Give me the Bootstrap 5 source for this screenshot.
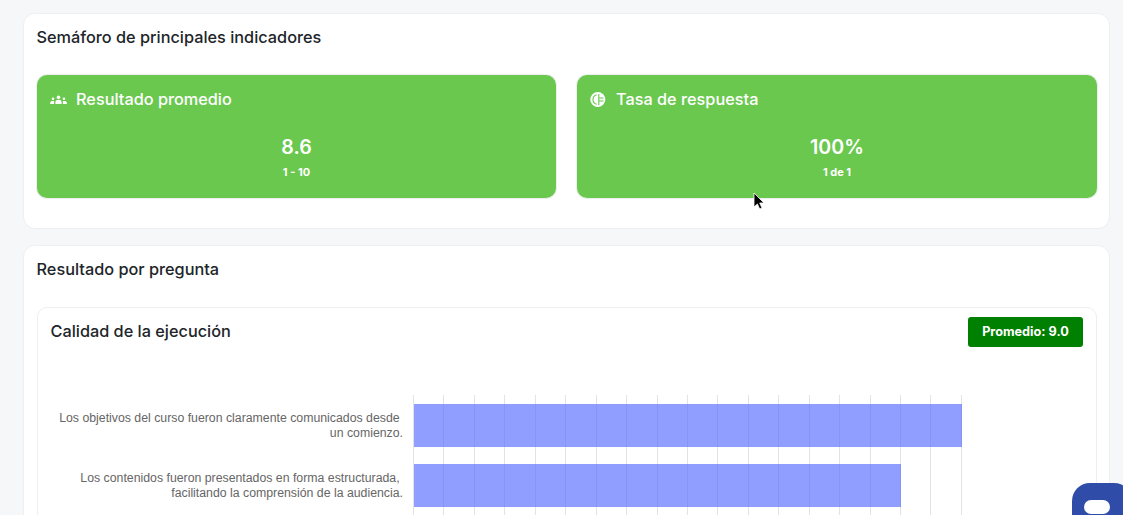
<!DOCTYPE html>
<html lang="es">
<head>
<meta charset="utf-8">
<title>Resultados</title>
<link href="https://cdn.jsdelivr.net/npm/bootstrap@5.3.0/dist/css/bootstrap.min.css" rel="stylesheet">
<style>
html,body{height:515px;overflow:hidden}
body{background:#f5f7f9;font-family:Inter,"Liberation Sans",sans-serif;color:#212529}
.shell{padding:13px 13px 0 23px;gap:16px;height:515px;overflow:hidden}
.panel{border:1px solid #eeeff1;border-radius:12px;background:#fff;flex:none}
.panel-top{height:216px;padding:13px 12px 13px 13px}
.panel-bottom{padding:13px 12px 13px 13px;height:400px}
.panel-title{font-size:16.3px;font-weight:450;line-height:20px;margin:-.5px 0 .5px -.5px;color:#212529}
.tiles{margin-top:28px;gap:21px}
.tile{flex:1;height:123px;background:#6bc84f;border-radius:10px;color:#fff;padding:13px 13px 0;box-shadow:0 0 0 1px #eceeef}
.tile:first-child{flex:0 0 519px}
.tile-head{font-size:16.3px;font-weight:500;line-height:22px;gap:9px}
.tile-ico{width:17px;height:17px;flex:none;margin-top:1px}
.tile-val{margin-top:25px;font-size:19.6px;font-weight:600;line-height:24px;text-align:center}
.tile-sub{margin-top:6px;font-size:11px;font-weight:700;line-height:14px;text-align:center}
.inner{margin-top:28px;border:1px solid #eeeff1;border-radius:10px;padding:9px 13px;height:300px}
.inner-title{font-size:16.3px;font-weight:450;margin:-2px 0 0 -.5px;line-height:30px}
.avg{background:green;color:#fff;font-size:12.7px;font-weight:700;line-height:30px;height:30px;width:115px;text-align:center;border-radius:3px}
.chart{margin-top:48px;margin-left:8px}
.labels{width:354px;padding-right:10px;padding-top:10px;font-family:"Liberation Sans",sans-serif;font-size:12.3px;line-height:15px;color:#666;text-align:right;white-space:nowrap}
.qlabel{height:60px;padding-top:6px}
.plot{position:relative;width:549px;height:130px;padding-top:9px;flex:none}
.bar{position:relative;z-index:1;height:43px;background:rgba(79,102,255,.63);margin-bottom:17px;margin-left:.5px}
.grid-lines{position:absolute;inset:0;display:flex;justify-content:space-between}
.grid-lines span{width:1px;background:#e3e3e3}
.chat-fab{position:fixed;z-index:2;left:1072px;top:483px;width:60px;height:60px;border-radius:18px;background:#2f4da8}
.chat-pill{position:absolute;left:12px;top:17px;width:26px;height:14px;border-radius:7px;background:#fff}
.mouse{position:fixed;left:753px;top:192px;width:13px;height:20px}
</style>
</head>
<body>
<main class="shell d-flex flex-column">
  <section class="panel panel-top">
    <h2 class="panel-title">Semáforo de principales indicadores</h2>
    <div class="tiles d-flex">
      <div class="tile">
        <div class="tile-head d-flex align-items-center">
          <svg class="tile-ico" viewBox="0 -1 17 17" fill="#fff"><circle cx="8.5" cy="5.200" r="1.800"/><circle cx="3" cy="6.800" r="1.300"/><circle cx="14" cy="6.800" r="1.300"/><path d="M5.400 12v-1.600c0-2 1.200-2.700 3.100-2.700s3.100.7 3.100 2.700V12zM.2 12v-1.100c0-1.300 1-1.900 2.800-1.900.5 0 .9.1 1.200.2-.1.400-.1.700-.1 1.200V12zM16.800 12v-1.100c0-1.300-1-1.900-2.800-1.900-.5 0-.9.1-1.200.2.1.400.1.700.1 1.200V12z"/></svg>
          <span>Resultado promedio</span>
        </div>
        <div class="tile-val">8.6</div>
        <div class="tile-sub">1 - 10</div>
      </div>
      <div class="tile">
        <div class="tile-head d-flex align-items-center">
          <svg class="tile-ico" viewBox="0 0 17 17"><circle cx="7.800" cy="8.500" r="7.500" fill="#fff"/><path d="M6.800 3.800a4.800 4.800 0 0 0 0 9.400M8.800 3v11M8.800 7h4.700M8.800 10h4.700" fill="none" stroke="#6bc84f" stroke-width="1.100"/></svg>
          <span>Tasa de respuesta</span>
        </div>
        <div class="tile-val">100%</div>
        <div class="tile-sub">1 de 1</div>
      </div>
    </div>
  </section>
  <section class="panel panel-bottom">
    <h2 class="panel-title">Resultado por pregunta</h2>
    <div class="inner">
      <div class="d-flex justify-content-between align-items-center">
        <h3 class="inner-title">Calidad de la ejecución</h3>
        <div class="avg">Promedio: 9.0</div>
      </div>
      <div class="chart d-flex">
        <div class="labels">
          <div class="qlabel">Los objetivos del curso fueron claramente comunicados desde&nbsp;<br>un comienzo.</div>
          <div class="qlabel">Los contenidos fueron presentados en forma estructurada,&nbsp;<br>facilitando la comprensión de la audiencia.</div>
        </div>
        <div class="plot">
          <div class="bar"></div>
          <div class="bar" style="width:88.8%"></div>
          <div class="grid-lines"><span></span><span></span><span></span><span></span><span></span><span></span><span></span><span></span><span></span><span></span><span></span><span></span><span></span><span></span><span></span><span></span><span></span><span></span><span></span></div>
        </div>
      </div>
    </div>
  </section>
</main>
<div class="chat-fab"><div class="chat-pill"></div></div>
<svg class="mouse" viewBox="0 0 13 20"><path d="M1 1v14l3.400-3 2.300 5 2.300-1-2.300-5H11z" fill="#000" stroke="#fff" stroke-width=".8"/></svg>
<script src="https://cdn.jsdelivr.net/npm/bootstrap@5.3.0/dist/js/bootstrap.bundle.min.js"></script>
</body>
</html>
